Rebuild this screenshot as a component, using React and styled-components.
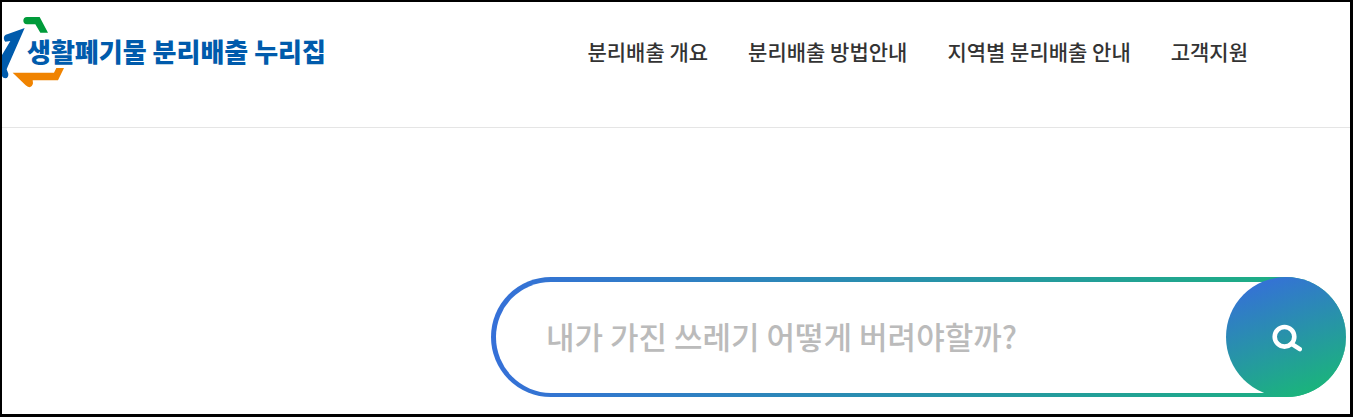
import { useState } from "react";
import styled, { createGlobalStyle } from "styled-components";

const GlobalStyle = createGlobalStyle`
  * {
    box-sizing: border-box;
  }
  body {
    margin: 0;
    background: #fff;
    font-family: "Noto Sans CJK KR", "Noto Sans", sans-serif;
  }
`;

const Page = styled.div`
  margin: 0 1px 3px 0;
  border: solid #000;
  border-width: 2px 3px 3px 2px;
  overflow: hidden;
`;

const Header = styled.header`
  display: flex;
  align-items: flex-start;
  justify-content: space-between;
  padding: 13px 102px 37px 0;
  border-bottom: 1px solid #e5e5e5;
`;

const Logo = styled.a`
  display: grid;
  align-items: center;
  text-decoration: none;
  color: #005bac;
`;

const LogoMark = styled.svg`
  grid-area: 1 / 1;
  width: 64px;
  height: 75px;
`;

const LogoText = styled.span`
  grid-area: 1 / 1;
  padding: 0 0 4px 25px;
  font-size: 26px;
  font-weight: 900;
  line-height: 36px;
  white-space: nowrap;
`;

const Menu = styled.ul`
  display: flex;
  gap: 40px;
  margin: 0;
  padding: 20px 0 0;
  list-style: none;
`;

const MenuLink = styled.a`
  font-size: 21px;
  font-weight: 500;
  line-height: 32px;
  color: #333;
  text-decoration: none;
  white-space: nowrap;
`;

const Main = styled.main`
  display: flex;
  justify-content: flex-end;
  padding: 149px 4px 17px;
`;

const SearchForm = styled.form`
  display: flex;
  width: 100%;
  max-width: 855px;
  border: solid transparent;
  border-width: 5px 0 4px 5px;
  border-radius: 60px;
  background: linear-gradient(#fff, #fff) padding-box,
    linear-gradient(90deg, #3570d8, #1bb37d) border-box;
`;

const SearchInput = styled.input`
  flex: 1;
  min-width: 0;
  padding: 0 20px 4px 50px;
  border: none;
  outline: none;
  background: transparent;
  font-family: inherit;
  font-size: 31px;
  font-weight: 500;
  color: #333;

  &::placeholder {
    color: #bbb;
    opacity: 1;
  }
`;

const SearchButton = styled.button`
  display: flex;
  align-items: center;
  justify-content: center;
  flex: none;
  width: 120px;
  height: 120px;
  margin: -5px 0 -4px;
  padding: 0;
  border: none;
  border-radius: 50%;
  background: linear-gradient(160deg, #3570d8 8%, #1bb37d 88%);
  cursor: pointer;
`;

const menus = [
  "분리배출 개요",
  "분리배출 방법안내",
  "지역별 분리배출 안내",
  "고객지원",
];

const App = () => {
  const [keyword, setKeyword] = useState("");

  const handleSubmit = (e) => {
    e.preventDefault();
  };

  return (
    <>
      <GlobalStyle />
      <Page>
        <Header>
          <Logo href="#">
            <LogoMark viewBox="6 45 192 225" aria-hidden="true">
              <path
                fill="#009b3a"
                d="M81 51H119L144 98H121L106 73H81Q70 71 70 62Q70 52 81 51Z"
              />
              <path
                fill="#005bac"
                d="M74 84L23 200L20 208L25 221Q26 233 16 235Q9 235 6 229V165L31 123L16 125Q9 118 13 108Q16 104 24 102Z"
              />
              <path
                fill="#f08300"
                d="M38 218H162L169 204H192L174 241H98L99 250Q97 260 88 262Q82 261 77 256Z"
              />
            </LogoMark>
            <LogoText>생활폐기물 분리배출 누리집</LogoText>
          </Logo>
          <nav>
            <Menu>
              {menus.map((item) => (
                <li key={item}>
                  <MenuLink href="#">{item}</MenuLink>
                </li>
              ))}
            </Menu>
          </nav>
        </Header>
        <Main>
          <SearchForm role="search" onSubmit={handleSubmit}>
            <SearchInput
              type="text"
              aria-label="검색어"
              placeholder="내가 가진 쓰레기 어떻게 버려야할까?"
              value={keyword}
              onChange={(e) => setKeyword(e.target.value)}
            />
            <SearchButton type="submit" aria-label="검색">
              <svg
                width="32"
                height="32"
                viewBox="0 0 32 32"
                fill="none"
                stroke="#fff"
                strokeLinecap="round"
              >
                <circle cx="14.5" cy="15.8" r="9.8" strokeWidth="4.6" />
                <path d="M22 23.2L29.8 28.2" strokeWidth="4.4" />
              </svg>
            </SearchButton>
          </SearchForm>
        </Main>
      </Page>
    </>
  );
};

export default App;
